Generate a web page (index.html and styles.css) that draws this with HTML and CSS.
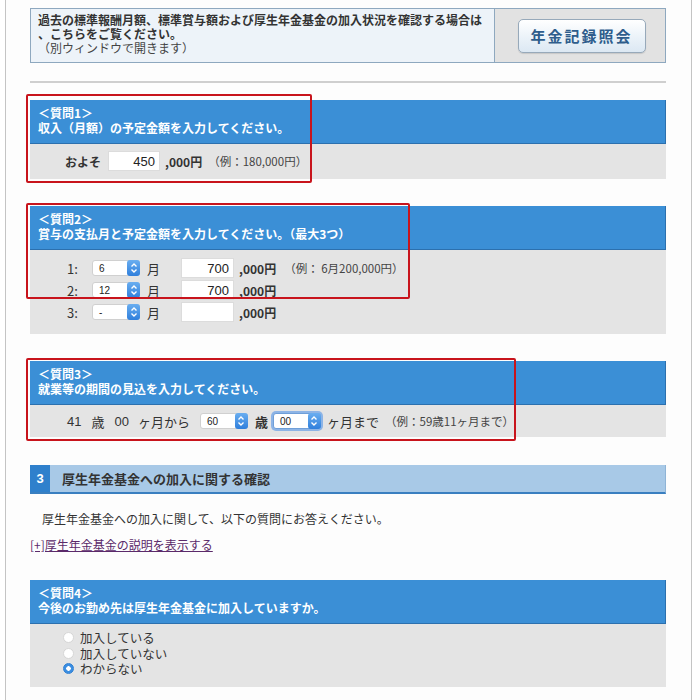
FILE: index.html
```html
<!DOCTYPE html>
<html lang="ja">
<head>
<meta charset="utf-8">
<title>年金見込額試算</title>
<link rel="stylesheet" href="styles.css">
</head>
<body>
<div class="page">
  <div class="info">
    <div class="info-text">
      <p class="info-strong">過去の標準報酬月額、標準賞与額および厚生年金基金の加入状況を確認する場合は</p>
      <p class="info-strong">、こちらをご覧ください。</p>
      <p class="info-note">（別ウィンドウで開きます）</p>
    </div>
    <div class="info-btn-cell"><span class="btn">年金記録照会</span></div>
  </div>

  <div class="rule"></div>

  <div class="q q-gap">
    <div class="q-head"><p>＜質問1＞</p><p>収入（月額）の予定金額を入力してください。</p></div>
    <div class="q-body body1">
      <div class="row">
        <span class="lbl-strong">およそ</span>
        <span class="input w52">450</span>
        <span class="unit">,000円</span>
        <span class="ex ex1">（例：180,000円）</span>
      </div>
    </div>
    <span class="mark mark1"></span>
  </div>

  <div class="q q-gap">
    <div class="q-head"><p>＜質問2＞</p><p>賞与の支払月と予定金額を入力してください。（最大3つ）</p></div>
    <div class="q-body body2">
      <div class="row">
        <span class="num">1:</span>
        <span class="sel"><span class="sel-val">6</span><span class="sel-btn"><svg viewBox="0 0 10 14" width="10" height="14"><path d="M2.5 5.5 L5 3 L7.5 5.5 M2.5 8.5 L5 11 L7.5 8.5" fill="none" stroke="#fff" stroke-width="1.4"/></svg></span></span>
        <span class="tsuki">月</span>
        <span class="input w53">700</span>
        <span class="unit">,000円</span>
        <span class="ex ex2">（例： 6月200,000円）</span>
      </div>
      <div class="row">
        <span class="num">2:</span>
        <span class="sel"><span class="sel-val">12</span><span class="sel-btn"><svg viewBox="0 0 10 14" width="10" height="14"><path d="M2.5 5.5 L5 3 L7.5 5.5 M2.5 8.5 L5 11 L7.5 8.5" fill="none" stroke="#fff" stroke-width="1.4"/></svg></span></span>
        <span class="tsuki">月</span>
        <span class="input w53">700</span>
        <span class="unit">,000円</span>
      </div>
      <div class="row">
        <span class="num">3:</span>
        <span class="sel"><span class="sel-val">-</span><span class="sel-btn"><svg viewBox="0 0 10 14" width="10" height="14"><path d="M2.5 5.5 L5 3 L7.5 5.5 M2.5 8.5 L5 11 L7.5 8.5" fill="none" stroke="#fff" stroke-width="1.4"/></svg></span></span>
        <span class="tsuki">月</span>
        <span class="input w53"></span>
        <span class="unit">,000円</span>
      </div>
    </div>
    <span class="mark mark2"></span>
  </div>

  <div class="q q-gap3">
    <div class="q-head"><p>＜質問3＞</p><p>就業等の期間の見込を入力してください。</p></div>
    <div class="q-body body3">
      <div class="row">
        <span class="t13 age">41</span>
        <span class="t13 sai">歳</span>
        <span class="t13 mm">00</span>
        <span class="t13 kara">ヶ月から</span>
        <span class="sel"><span class="sel-val">60</span><span class="sel-btn"><svg viewBox="0 0 10 14" width="10" height="14"><path d="M2.5 5.5 L5 3 L7.5 5.5 M2.5 8.5 L5 11 L7.5 8.5" fill="none" stroke="#fff" stroke-width="1.4"/></svg></span></span>
        <span class="sai2">歳</span>
        <span class="sel sel-focus"><span class="sel-val">00</span><span class="sel-btn"><svg viewBox="0 0 10 14" width="10" height="14"><path d="M2.5 5.5 L5 3 L7.5 5.5 M2.5 8.5 L5 11 L7.5 8.5" fill="none" stroke="#fff" stroke-width="1.4"/></svg></span></span>
        <span class="t13 made">ヶ月まで</span>
        <span class="ex ex3">（例：59歳11ヶ月まで）</span>
      </div>
    </div>
    <span class="mark mark3"></span>
  </div>

  <div class="sec">
    <span class="sec-num">3</span>
    <span class="sec-title">厚生年金基金への加入に関する確認</span>
  </div>
  <p class="lead">厚生年金基金への加入に関して、以下の質問にお答えください。</p>
  <p class="linkline"><a class="toggle" href="#">[+]厚生年金基金の説明を表示する</a></p>

  <div class="q">
    <div class="q-head"><p>＜質問4＞</p><p>今後のお勤め先は厚生年金基金に加入していますか。</p></div>
    <div class="q-body body4">
      <label class="radio"><span class="dot"></span>加入している</label>
      <label class="radio"><span class="dot"></span>加入していない</label>
      <label class="radio"><span class="dot on"></span>わからない</label>
    </div>
  </div>
</div>
</body>
</html>
```

FILE: styles.css
```css
html, body {
  margin: 0;
  padding: 0;
  background: #ffffff;
}
body {
  font-family: "Noto Sans CJK JP", "Noto Sans", "Liberation Sans", sans-serif;
  color: #333;
  font-size: 12px;
}
.page {
  margin-left: 5px;
  width: 636px;
  padding: 8px 25px 20px 24px;
  border-left: 1px solid #c4c4c4;
  border-right: 1px solid #c4c4c4;
  background: #fdfdfd;
  min-height: 680px;
}
.info {
  display: flex;
  height: 55px;
  box-sizing: border-box;
  border: 1px solid #8ea8bf;
}
.info-text {
  flex: 1;
  background: #edf3f9;
  padding: 4px 0 0 7px;
}
.info-text p {
  margin: 0;
  height: 14px;
  line-height: 14px;
}
.info-strong {
  font-weight: bold;
  font-size: 12px;
  color: #333;
}
.info-note {
  font-size: 12px;
  color: #444;
}
.info-btn-cell {
  width: 170px;
  background: #e2e2e2;
  border-left: 1px solid #8ea8bf;
  display: flex;
  align-items: center;
  justify-content: center;
}
.btn {
  display: flex;
  align-items: center;
  justify-content: center;
  width: 128px;
  height: 34px;
  box-sizing: border-box;
  border: 1px solid #97a9ba;
  border-radius: 5px;
  background: linear-gradient(#ffffff, #e9f1f8 60%, #dce8f3);
  box-shadow: 0 1px 1px rgba(0,0,0,0.12);
  color: #2e5d8c;
  font-weight: bold;
  font-size: 15px;
  letter-spacing: 2px;
  margin-left: 3px;
}
.rule {
  height: 2px;
  background: #cfcfcf;
  margin: 18px 0 17px;
}
.q {
  position: relative;
}
.q-gap { margin-bottom: 27px; }
.q-gap3 { margin-bottom: 28px; }
.q-head {
  background: #3b8fd6;
  color: #fff;
  font-weight: bold;
  font-size: 12px;
  line-height: 15px;
  padding: 5px 8px 8px;
  border-bottom: 1px solid #2c70ae;
  border-right: 1px solid #2c70ae;
}
.q-head p {
  margin: 0;
  height: 15px;
}
.q-body {
  background: #e4e4e4;
}
.body1 { padding: 7px 0 8px 35px; }
.body2 { padding: 7px 0 11px 37px; }
.body3 { padding: 5px 0 5px 37px; }
.body4 { padding: 6px 0 10px 33px; }
.row {
  display: flex;
  align-items: center;
  height: 22px;
}
.body1 .row { height: 20px; }
.lbl-strong {
  font-weight: bold;
  font-size: 12px;
  width: 36px;
  margin-right: 7px;
  color: #333;
}
.input {
  height: 20px;
  box-sizing: border-box;
  background: #fff;
  border: 1px solid #dcdcdc;
  text-align: right;
  font-size: 13px;
  line-height: 19px;
  padding-right: 4px;
  color: #222;
  font-family: "Liberation Sans", "Noto Sans CJK JP", sans-serif;
}
.w52 { width: 52px; }
.w53 { width: 53px; }
.unit {
  font-weight: bold;
  font-size: 12px;
  margin-left: 5px;
  color: #333;
}
.ex {
  font-size: 11.5px;
  color: #444;
}
.ex1 { margin-left: 6px; }
.ex2 { margin-left: 8px; }
.ex3 { margin-left: 2px; }
.num {
  width: 20px;
  font-size: 13px;
  color: #333;
  margin-right: 5px;
}
.sel {
  display: inline-flex;
  align-items: center;
  justify-content: space-between;
  width: 48px;
  height: 16px;
  box-sizing: border-box;
  background: #fff;
  border: 1px solid #d0d0d0;
  border-radius: 3px;
  position: relative;
}
.sel-val {
  font-size: 10px;
  padding-left: 6px;
  color: #222;
  font-family: "Liberation Sans", sans-serif;
}
.sel-btn {
  width: 13px;
  height: 16px;
  margin-right: -1px;
  background: linear-gradient(#6aaef0, #2f7fdc);
  border-radius: 3px;
  display: flex;
  align-items: center;
  justify-content: center;
}
.sel-focus {
  box-shadow: 0 0 0 2px #8db4e6;
  border-color: #6f9fd8;
}
.tsuki {
  font-size: 13px;
  margin-left: 7px;
  margin-right: 21px;
  color: #333;
}
.t13 {
  font-size: 13px;
  color: #333;
}
.age { font-family: "Liberation Sans", sans-serif; }
.sai { margin-left: 10px; }
.mm { margin-left: 10px; font-family: "Liberation Sans", sans-serif; }
.kara { margin-left: 9px; margin-right: 10px; }
.sai2 {
  font-size: 13px;
  font-weight: bold;
  margin: 0 5px 0 7px;
  color: #333;
}
.made { margin-left: 6px; margin-right: 4px; }
.mark {
  position: absolute;
  border: 2px solid #c8141c;
  border-radius: 2px;
  pointer-events: none;
}
.mark1 { left: -4px; top: -6px; width: 282px; height: 85px; }
.mark2 { left: -4px; top: -3px; width: 380px; height: 92px; }
.mark3 { left: -4px; top: -3px; width: 486px; height: 79px; }
.sec {
  display: flex;
  height: 29px;
  box-sizing: border-box;
  border-bottom: 2px solid #3a7fc0;
  background: #a8c9e7;
  border-right: 1px solid #8fb4d6;
}
.sec-num {
  width: 20px;
  background: #2f80cc;
  color: #fff;
  font-weight: bold;
  font-size: 13px;
  display: flex;
  align-items: center;
  justify-content: center;
  font-family: "Liberation Sans", sans-serif;
}
.sec-title {
  display: flex;
  align-items: center;
  padding-left: 12px;
  font-weight: bold;
  font-size: 13px;
  color: #333;
}
.lead {
  margin: 16px 0 0 12px;
  font-size: 12px;
  line-height: 18px;
  color: #333;
}
.linkline {
  margin: 8px 0 26px;
  font-size: 12px;
  line-height: 18px;
}
.toggle {
  color: #5b2a6a;
  text-decoration: underline;
}
.radio {
  display: flex;
  align-items: center;
  height: 15.5px;
  font-size: 12.5px;
  color: #333;
}
.dot {
  width: 11px;
  height: 11px;
  box-sizing: border-box;
  border-radius: 50%;
  background: #fff;
  border: 1px solid #d6d6d6;
  margin-right: 6px;
}
.dot.on {
  background: radial-gradient(circle, #ffffff 0 2px, #3b8ee2 2.5px);
  border-color: #2f7fd2;
}
```
